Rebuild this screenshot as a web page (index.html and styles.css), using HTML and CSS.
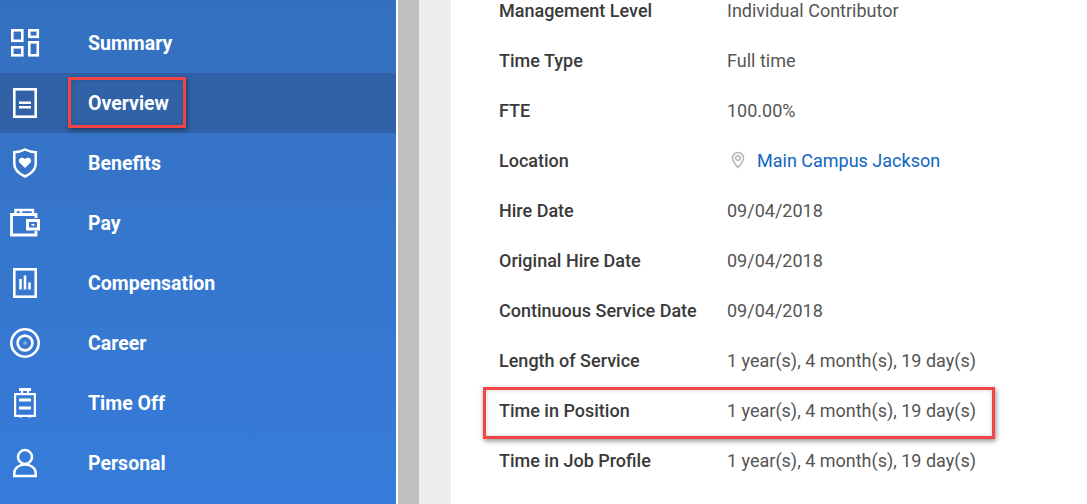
FILE: index.html
```html
<!DOCTYPE html>
<html lang="en">
<head>
<meta charset="utf-8">
<title>Overview</title>
<link rel="stylesheet" href="styles.css">
</head>
<body>
<div class="page">
  <nav class="sidebar">
    <a class="nav-item"><span class="nav-icon"><svg width="30" height="30" viewBox="0 0 30 30" fill="none" stroke="#fff" stroke-width="2.600"><rect x="2.300" y="2.300" width="10" height="10.500"/><rect x="19.300" y="2.300" width="8.500" height="6.500"/><rect x="2.300" y="19.300" width="10" height="8"/><rect x="19.300" y="14.300" width="8.500" height="13"/></svg></span><span class="nav-label">Summary</span></a>
    <a class="nav-item active"><span class="nav-icon"><svg width="30" height="30" viewBox="0 0 30 30" fill="none" stroke="#fff" stroke-width="2.600"><rect x="4.300" y="1.300" width="21.400" height="27.400"/><path d="M9 14.800h12M9 19.300h12" stroke-width="2.500"/></svg></span><span class="nav-label">Overview</span></a>
    <a class="nav-item"><span class="nav-icon"><svg width="30" height="30" viewBox="0 0 30 30" fill="none" stroke="#fff" stroke-width="2.500"><path d="M15 1.500c3.500 1.800 7 2.600 10.700 2.800v11.500c0 6-4.700 10-10.700 12.700C9 25.800 4.300 21.800 4.300 15.800V4.300C8 4.100 11.500 3.300 15 1.500z"/><path d="M15 20l-5.300-5.300c-2.800-3.300 1.800-7.200 5.300-3.600 3.500-3.600 8.100.3 5.300 3.600z" fill="#fff" stroke="none"/></svg></span><span class="nav-label">Benefits</span></a>
    <a class="nav-item"><span class="nav-icon"><svg width="30" height="30" viewBox="0 0 30 30" fill="none" stroke="#fff" stroke-width="2.800"><path d="M26 10V6.500H1.500V27H26v-4"/><path d="M5.500 6V2h17.500v4M11 2v4" stroke-width="2.400"/><rect x="17.500" y="12.500" width="11" height="8.500" stroke-width="3"/><path d="M21.500 16.800h3" stroke-width="1.800"/></svg></span><span class="nav-label">Pay</span></a>
    <a class="nav-item"><span class="nav-icon"><svg width="30" height="30" viewBox="0 0 30 30" fill="none" stroke="#fff" stroke-width="2.600"><rect x="4.300" y="1.300" width="21.400" height="27.400"/><path d="M10.500 11v10.500M15 7.500v14M19.500 14.500v7"/></svg></span><span class="nav-label">Compensation</span></a>
    <a class="nav-item"><span class="nav-icon"><svg width="30" height="30" viewBox="0 0 30 30" fill="none" stroke="#fff" stroke-width="2.600"><circle cx="15" cy="15" r="13.700"/><circle cx="15" cy="15" r="7.400"/><circle cx="15" cy="15" r="2" fill="#fff" fill-opacity="0.35" stroke="none"/></svg></span><span class="nav-label">Career</span></a>
    <a class="nav-item"><span class="nav-icon"><svg width="30" height="30" viewBox="0 0 30 30" fill="none" stroke="#fff" stroke-width="2.200"><rect x="5.100" y="6.100" width="19.800" height="21.800"/><path d="M9 12h12M9 20h12" stroke-width="3"/><path d="M9 1.500h12" stroke-width="3"/><path d="M12 3v3M18 3v3" stroke-width="2"/><path d="M10.500 27.500v2M19.500 27.500v2" stroke-width="3"/></svg></span><span class="nav-label">Time Off</span></a>
    <a class="nav-item"><span class="nav-icon"><svg width="30" height="30" viewBox="0 0 30 30" fill="none" stroke="#fff" stroke-width="2.500"><circle cx="15" cy="9" r="7"/><path d="M4.300 28v-3c0-5 5-8.500 10.700-8.500s10.700 3.500 10.700 8.500v3z"/></svg></span><span class="nav-label">Personal</span></a>
  </nav>
  <div class="gap-white"></div>
  <div class="gutter"></div>
  <div class="rail"></div>
  <main class="details">
    <div class="row"><span class="label">Management Level</span><span class="value">Individual Contributor</span></div>
    <div class="row"><span class="label">Time Type</span><span class="value">Full time</span></div>
    <div class="row"><span class="label">FTE</span><span class="value">100.00%</span></div>
    <div class="row"><span class="label">Location</span><span class="value location"><svg class="pin" width="16" height="18" viewBox="0 0 16 18" fill="none" stroke="#b4b4b4" stroke-width="1.500"><path d="M8 16.500C4.500 12.500 2.500 10 2.500 7a5.500 5.500 0 0 1 11 0c0 3-2 5.500-5.500 9.500z"/><circle cx="8" cy="7" r="2.300"/></svg><span class="link">Main Campus Jackson</span></span></div>
    <div class="row"><span class="label">Hire Date</span><span class="value">09/04/2018</span></div>
    <div class="row"><span class="label">Original Hire Date</span><span class="value">09/04/2018</span></div>
    <div class="row"><span class="label">Continuous Service Date</span><span class="value">09/04/2018</span></div>
    <div class="row"><span class="label">Length of Service</span><span class="value">1 year(s), 4 month(s), 19 day(s)</span></div>
    <div class="row"><span class="label">Time in Position</span><span class="value">1 year(s), 4 month(s), 19 day(s)</span></div>
    <div class="row"><span class="label">Time in Job Profile</span><span class="value">1 year(s), 4 month(s), 19 day(s)</span></div>
  </main>
  <div class="callout callout-nav"></div>
  <div class="callout callout-row"></div>
</div>
</body>
</html>
```

FILE: styles.css
```css
* { box-sizing: border-box; }
html, body { margin: 0; padding: 0; height: 100%; overflow: hidden; background: #fff; }
.page {
  position: relative;
  display: flex;
  width: 1087px;
  height: 504px;
  overflow: hidden;
  font-family: Roboto, "Liberation Sans", sans-serif;
}
.sidebar {
  width: 396px;
  flex: none;
  padding-top: 13px;
  background: linear-gradient(180deg, #3470bf 0%, #377cdb 100%);
}
.nav-item {
  display: flex;
  align-items: center;
  height: 60px;
  color: #fff;
  font-size: 19.500px;
  font-weight: 700;
}
.nav-item.active { background: #3162a8; }
.nav-icon { width: 88px; padding-left: 10px; display: flex; flex: none; }
.gap-white { width: 2px; flex: none; background: #fff; }
.gutter { width: 21px; flex: none; background: #c0c0c0; }
.rail { width: 32px; flex: none; background: #edeef0; }
.details { flex: 1; margin-top: -15px; padding-left: 48px; }
.row {
  display: flex;
  align-items: center;
  height: 50px;
  font-size: 18px;
}
.label { width: 228px; flex: none; font-weight: 500; color: #3a3a3a; }
.value { color: #555; }
.location { display: flex; align-items: center; }
.pin { margin-left: 3px; margin-right: 11px; }
.link { color: #0f66c0; }
.callout {
  position: absolute;
  border: 3px solid #f24545;
  box-shadow: 1px 2px 5px rgba(0, 0, 0, 0.45), inset 0 0 4px rgba(0, 0, 0, 0.2);
}
.callout-nav { left: 68px; top: 77px; width: 118px; height: 51px; }
.callout-row { left: 483px; top: 387px; width: 512px; height: 52px; }
```
